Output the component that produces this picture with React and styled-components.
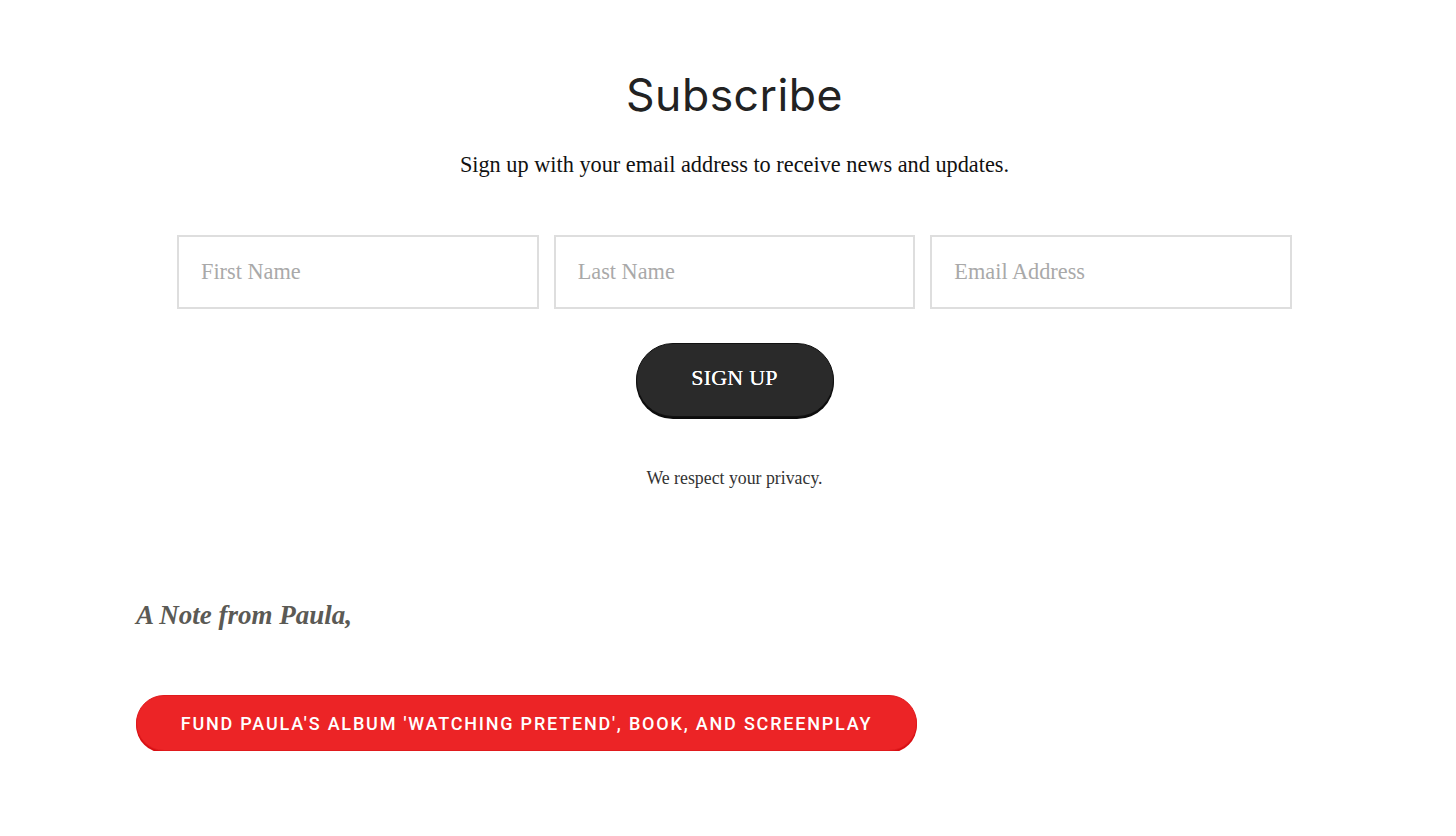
import React from "react";
import styled, { createGlobalStyle } from "styled-components";

const GlobalStyle = createGlobalStyle`
  html, body {
    margin: 0;
    padding: 0;
    background: #fff;
  }
  body {
    font-family: "Liberation Serif", "Times New Roman", serif;
  }
`;

const Page = styled.div`
  width: 1197px;
  margin-left: 136px;
  padding-top: 68px;
`;

const Subscribe = styled.section`
  display: flex;
  flex-direction: column;
  align-items: center;
  padding: 0 41px;
`;

const Title = styled.h2`
  margin: 0;
  font-family: Inter, "Liberation Sans", sans-serif;
  font-weight: 400;
  font-size: 44.5px;
  line-height: 54px;
  letter-spacing: 0.5px;
  color: #222;
`;

const Lead = styled.p`
  margin: 28px 0 0;
  font-size: 22.3px;
  line-height: 30px;
  color: #111;
`;

const Fields = styled.form`
  margin-top: 55px;
  width: 100%;
  display: grid;
  grid-template-columns: repeat(3, 1fr);
  gap: 15px;
`;

const Field = styled.input`
  box-sizing: border-box;
  height: 74px;
  width: 100%;
  padding: 0 22px;
  border: 2px solid #dedede;
  background: #fff;
  font-family: "Liberation Serif", "Times New Roman", serif;
  font-size: 22.3px;
  color: #222;
  outline: none;
  &::placeholder {
    color: #a9a9a9;
  }
`;

const SignUp = styled.button`
  margin-top: 34px;
  width: 198px;
  height: 74px;
  padding: 0 0 4px;
  border-radius: 37px;
  border: 1px solid #111;
  background: #2a2a2a;
  box-shadow: 0 2px 0 #0c0c0c;
  color: #fff;
  font-family: "Liberation Serif", "Times New Roman", serif;
  font-size: 22px;
  letter-spacing: 0.2px;
  text-shadow: 0 0 0.4px #fff;
  cursor: pointer;
`;

const Privacy = styled.p`
  margin: 49px 0 0;
  font-size: 17.8px;
  line-height: 24px;
  color: #333;
`;

const Note = styled.h3`
  margin: 108px 0 0;
  font-size: 27px;
  line-height: 34px;
  font-style: italic;
  font-weight: 700;
  color: #5b5a55;
`;

const Fund = styled.a`
  box-sizing: border-box;
  margin-top: 63px;
  display: flex;
  align-items: center;
  justify-content: center;
  width: 781px;
  height: 56px;
  border-radius: 28px;
  background: #ec2426;
  border: 1px solid #e01a1d;
  box-shadow: 0 2px 0 #d80e12;
  color: #fff;
  font-family: Roboto, "Liberation Sans", sans-serif;
  font-weight: 500;
  font-size: 18px;
  letter-spacing: 1.8px;
  text-transform: uppercase;
  text-decoration: none;
`;

export default function App() {
  return (
    <>
      <GlobalStyle />
      <Page>
        <Subscribe>
          <Title>Subscribe</Title>
          <Lead>Sign up with your email address to receive news and updates.</Lead>
          <Fields onSubmit={(e) => e.preventDefault()}>
            <Field placeholder="First Name" />
            <Field placeholder="Last Name" />
            <Field placeholder="Email Address" />
          </Fields>
          <SignUp type="button">SIGN UP</SignUp>
          <Privacy>We respect your privacy.</Privacy>
        </Subscribe>
        <Note>A Note from Paula,</Note>
        <Fund href="#">Fund Paula's album 'Watching Pretend', book, and screenplay</Fund>
      </Page>
    </>
  );
}
